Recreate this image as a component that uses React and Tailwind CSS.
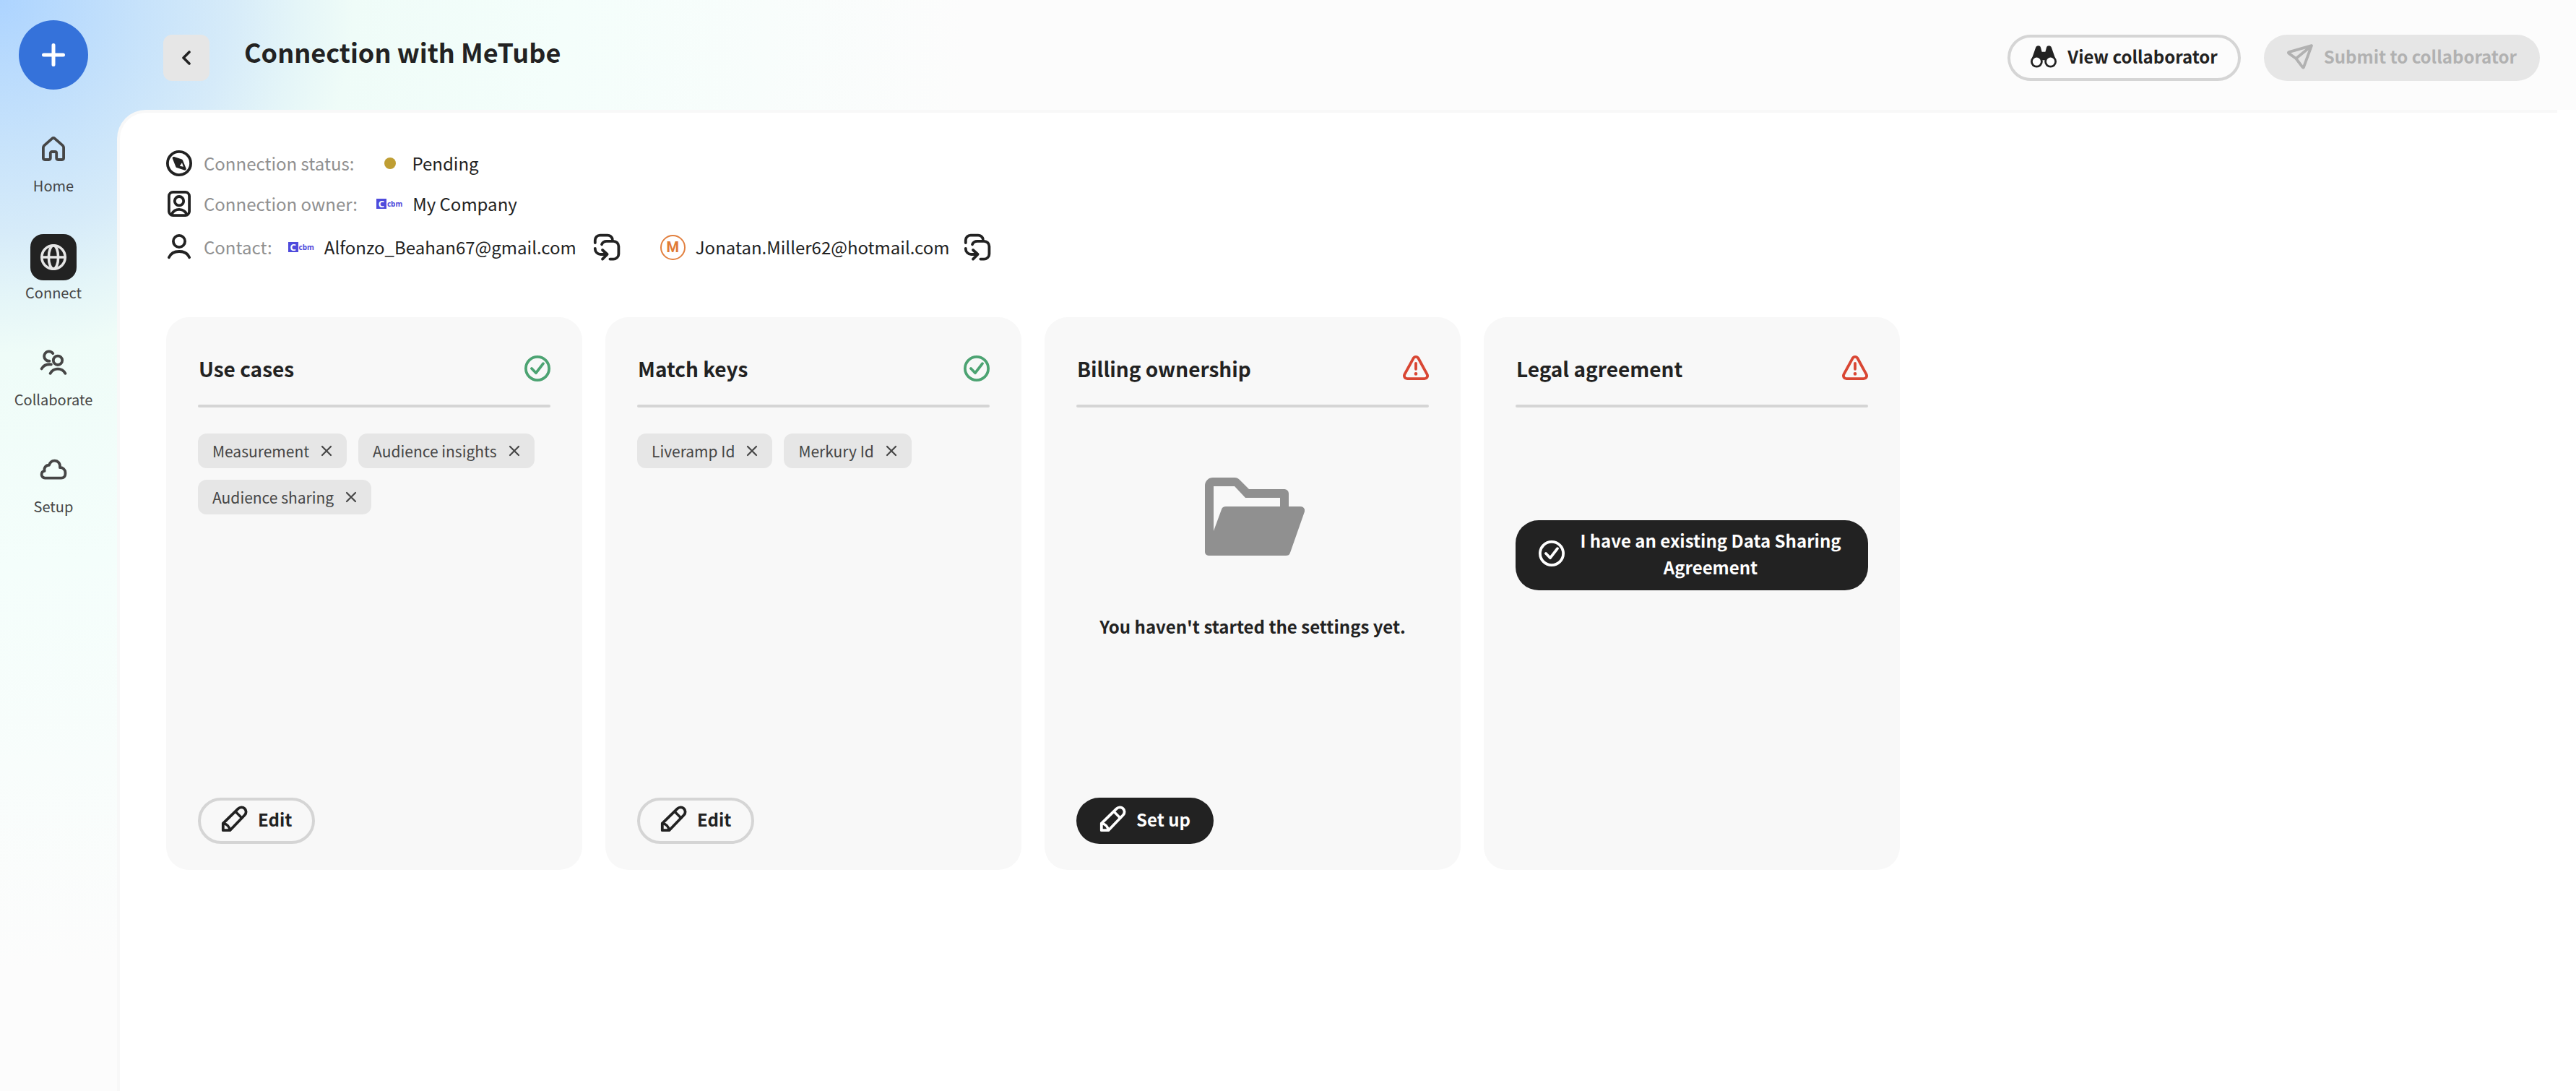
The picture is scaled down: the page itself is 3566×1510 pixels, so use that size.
import React from "react";

function Icon({ children, className = "size-10", stroke = 1.9 }) {
  return (
    <svg
      viewBox="0 0 20 20"
      fill="none"
      stroke="currentColor"
      strokeWidth={stroke}
      strokeLinecap="round"
      strokeLinejoin="round"
      aria-hidden="true"
      className={`shrink-0 ${className}`}
    >
      {children}
    </svg>
  );
}

const HomeIcon = () => (
  <Icon>
    <path d="M9 2.9 3.6 7.7a1.9 1.9 0 0 0-.65 1.4v7.3a1.1 1.1 0 0 0 1.1 1.1H6.8a1.1 1.1 0 0 0 1.1-1.1V13a1 1 0 0 1 1-1h2.2a1 1 0 0 1 1 1v3.4a1.1 1.1 0 0 0 1.1 1.1h2.75a1.1 1.1 0 0 0 1.1-1.1V9.1a1.9 1.9 0 0 0-.65-1.4L11 2.9a1.5 1.5 0 0 0-2 0z" />
  </Icon>
);

const GlobeIcon = () => (
  <Icon stroke={1.8}>
    <circle cx="10" cy="10" r="8.1" />
    <ellipse cx="10" cy="10" rx="3.3" ry="8.1" />
    <path d="M1.9 10h16.2" />
  </Icon>
);

const PeopleIcon = () => (
  <Icon>
    <circle cx="13" cy="8.4" r="3.1" />
    <path d="M9.6 3.6A3.3 3.3 0 1 0 7.2 8.8M7.8 17.4c1.1-2 3-3.1 5.2-3.1s4.1 1.1 5.2 3.1M1.8 14.2c1.2-2.2 3.6-3.4 6.6-3" />
  </Icon>
);

const CloudIcon = () => (
  <Icon>
    <path d="M4.1 15.8a2.3 2.3 0 0 1-2.3-2.4c0-1.5.9-2.4 2-2.5-.5-2.2 1-4.2 3.2-4C7.6 4.9 9 3.8 10.7 3.8c2.5 0 4.1 2 3.8 4.8 2.1-.1 3.7 1.4 3.7 3.4v1c0 1.7-1.2 2.8-2.8 2.8z" />
  </Icon>
);

const CompassIcon = () => (
  <Icon>
    <circle cx="10" cy="10" r="8.05" />
    <path d="m6.3 6.4 5.3 1.8 2.3 5.7-5.3-1.8z" fill="currentColor" />
    <path d="m12 9.6.9 2.8-2.5-.5z" fill="white" stroke="none" />
  </Icon>
);

const OwnerIcon = () => (
  <Icon>
    <rect x="2.95" y="1.95" width="14.1" height="16.1" rx="2.8" />
    <circle cx="10" cy="8.1" r="3.1" />
    <path d="M4.9 17c1.1-2 3-3.1 5.1-3.1s4 1.1 5.1 3.1" />
  </Icon>
);

const PersonIcon = () => (
  <Icon>
    <circle cx="10" cy="6" r="4.05" />
    <path d="M2.95 17.1C4.1 14.6 6.8 13 10 13s5.9 1.6 7.05 4.1" />
  </Icon>
);

const ReassignIcon = () => (
  <Icon>
    <path d="M1.9 7V5.2a3.4 3.4 0 0 1 3.4-3.4h5.2c1.7 0 2.9 1 3.4 2.7" />
    <path d="M6.5 8.1c.6-1.4 1.8-2.2 3.4-2.2h4.7a3.6 3.6 0 0 1 3.6 3.6v5.2a3.6 3.6 0 0 1-3.6 3.6h-2.4" />
    <path d="M1.9 10.9v.3A3.8 3.8 0 0 0 5.7 15h4.4M7 12l3.3 3L7 18.3" />
  </Icon>
);

const PencilIcon = () => (
  <Icon>
    <path d="M2.4 17.6v-4.8L12.9 2.6a3 3 0 0 1 4.5 4.4L7.2 17.6z" />
    <path d="m11 4.6 4.4 4.5M2.5 12.9c2.5.2 4.4 2.2 4.6 4.6" strokeWidth="1.7" />
  </Icon>
);

const CheckCircleIcon = () => (
  <Icon>
    <circle cx="10" cy="10" r="8.05" />
    <path d="m6 10 3 3.1 5-6.5" />
  </Icon>
);

const AlertIcon = () => (
  <Icon>
    <path d="M8.3 2.9a1.95 1.95 0 0 1 3.4 0l6.1 11.2a2.05 2.05 0 0 1-1.8 3H4a2.05 2.05 0 0 1-1.8-3z" />
    <path d="M10 6.4v4" />
    <circle cx="10" cy="13.7" r="1.15" fill="currentColor" stroke="none" />
  </Icon>
);

const BinocularsIcon = () => (
  <Icon stroke={1.4}>
    <path
      d="m1.5 12.6 3-8.6c.5-1.7 3-1.8 3.5-.1l.8 3h2.4l.8-3c.5-1.7 3-1.6 3.5.1l3 8.6-6.6 1.2-1-1.2H9.1l-1 1.2z"
      fill="currentColor"
      stroke="none"
    />
    <circle cx="5.2" cy="13.6" r="3.5" fill="white" />
    <circle cx="14.8" cy="13.6" r="3.5" fill="white" />
  </Icon>
);

const SendIcon = () => (
  <Icon>
    <path d="M18 2.6 2.2 7.1a.4.4 0 0 0-.1.7l5.1 3.7 4.6 6.1a.4.4 0 0 0 .7-.1zL7.2 11.5" />
  </Icon>
);

const FolderIcon = () => (
  <svg viewBox="0 0 138 108" fill="#909090" aria-hidden="true" className="h-[108px] w-[138px]">
    <path
      fillRule="evenodd"
      d="M5 108a5 5 0 0 1-5-5V11A11 11 0 0 1 11 0h30c3 0 5 1 7 3l13 13h49a6 6 0 0 1 6 6v18h16c4 0 7 3 6 7l-20 57c-1 3-3 4-6 4zM12 12v62l11-30c1-3 3-4 6-4h75V28H56L41 12z"
    />
  </svg>
);

const FONT = "font-['Noto_Sans_CJK_SC','Noto_Sans',sans-serif]";

const NAV = [
  { label: "Home", icon: HomeIcon },
  { label: "Connect", icon: GlobeIcon, active: true },
  { label: "Collaborate", icon: PeopleIcon },
  { label: "Setup", icon: CloudIcon },
];

function Sidebar() {
  return (
    <aside className="flex w-[162px] shrink-0 flex-col pt-7">
      <div className="flex w-[148px] flex-col items-center">
        <button
          type="button"
          aria-label="Create"
          className="flex size-24 items-center justify-center rounded-full bg-[#3572da] text-white"
        >
          <svg viewBox="0 0 32 32" className="size-8" stroke="currentColor" strokeWidth="5" strokeLinecap="round">
            <path d="M16 2.5v27M2.5 16h27" />
          </svg>
        </button>
        <nav className="mt-[52px] flex flex-col gap-[50px]">
          {NAV.map(({ label, icon: Glyph, active }) => (
            <a
              key={label}
              href="#"
              aria-current={active ? "page" : undefined}
              className="flex flex-col items-center text-[20px] leading-[34px] text-[#464646]"
            >
              <span
                className={
                  active
                    ? "flex size-16 items-center justify-center rounded-[18px] bg-[#222222] text-[#e6e6e6]"
                    : "flex size-16 items-center justify-center pb-1"
                }
              >
                <Glyph />
              </span>
              {label}
            </a>
          ))}
        </nav>
      </div>
    </aside>
  );
}

function OutlineButton({ children }) {
  return (
    <button
      type="button"
      className="flex h-16 items-center gap-[13px] rounded-full border-4 border-[#d5d5d5] pr-[28px] pb-1 pl-[26px] text-[24px] leading-8 font-bold text-[#222222]"
    >
      {children}
    </button>
  );
}

function Header() {
  return (
    <header className="flex h-[152px] items-center justify-between pt-2 pr-[50px] pl-16">
      <div className="flex items-center gap-12">
        <button
          type="button"
          aria-label="Back"
          className="flex size-16 items-center justify-center rounded-xl bg-[#e6e6e6] text-[#222222]"
        >
          <svg viewBox="0 0 20 20" className="size-5" fill="none" stroke="currentColor" strokeWidth="3.6" strokeLinecap="round" strokeLinejoin="round">
            <path d="m14 2-8 8 8 8" />
          </svg>
        </button>
        <h1 className="pb-[18px] text-[36px] leading-[46px] font-bold text-[#222222]">Connection with MeTube</h1>
      </div>
      <div className="flex items-center gap-8">
        <OutlineButton>
          <BinocularsIcon />
          View collaborator
        </OutlineButton>
        <button
          type="button"
          disabled
          className="flex h-16 items-center gap-[13px] rounded-full bg-[#e6e6e6] pr-8 pb-1 pl-[30px] text-[24px] leading-8 font-bold text-[#b1b1b1]"
        >
          <SendIcon />
          Submit to collaborator
        </button>
      </div>
    </header>
  );
}

function CompanyLogo() {
  return (
    <span className="flex items-center gap-px font-['Noto_Sans',sans-serif] text-[10px] leading-[14px] font-bold text-[#4f4bdc]">
      <span className="flex size-[14px] items-center justify-center bg-[#4f4bdc] text-[13px] text-white">C</span>
      cbm
    </span>
  );
}

function Label({ children }) {
  return <span className="text-[#909090]">{children}</span>;
}

function Details() {
  return (
    <section className="-ml-0.5 flex flex-col text-[24px] leading-10 text-[#222222]">
      <div className="flex items-center gap-[14px]">
        <CompassIcon />
        <Label>Connection status:</Label>
        <span className="ml-7 size-4 rounded-full bg-[#bf9e33]" />
        <span className="ml-2">Pending</span>
      </div>
      <div className="mt-4 flex items-center gap-[14px]">
        <OwnerIcon />
        <Label>Connection owner:</Label>
        <span className="ml-3">
          <CompanyLogo />
        </span>
        <span>My Company</span>
      </div>
      <div className="mt-5 flex items-center gap-[14px]">
        <PersonIcon />
        <Label>Contact:</Label>
        <span className="ml-2">
          <CompanyLogo />
        </span>
        <span>Alfonzo_Beahan67@gmail.com</span>
        <button type="button" aria-label="Reassign contact" className="ml-2">
          <ReassignIcon />
        </button>
        <span className="ml-10 flex size-[35px] items-center justify-center rounded-full border-2 border-[#e2803f] font-['Roboto',sans-serif] text-[20px] font-bold text-[#e07a35]">
          M
        </span>
        <span>Jonatan.Miller62@hotmail.com</span>
        <button type="button" aria-label="Reassign contact" className="ml-1">
          <ReassignIcon />
        </button>
      </div>
    </section>
  );
}

function Card({ title, done, children, footer }) {
  return (
    <section className="flex min-h-[765px] w-[576px] flex-col rounded-[32px] bg-[#f8f8f8] px-11 pt-[51px] pb-9">
      <div className="flex items-center justify-between pl-px">
        <h2 className="text-[28px] leading-10 font-bold text-[#222222]">{title}</h2>
        <span className={done ? "-mr-0.5 text-[#4ca372]" : "-mr-0.5 text-[#d94633]"}>
          {done ? <CheckCircleIcon /> : <AlertIcon />}
        </span>
      </div>
      <hr className="mt-[30px] h-1 rounded-full border-0 bg-[#d5d5d5]" />
      <div className="flex flex-1 flex-col pt-9">{children}</div>
      {footer}
    </section>
  );
}

function Tags({ items }) {
  return (
    <ul className="flex flex-wrap gap-4">
      {items.map((item) => (
        <li
          key={item}
          className="flex h-12 items-center gap-4 rounded-xl bg-[#e6e6e6] px-5 text-[21px] leading-8 text-[#464646]"
        >
          {item}
          <button type="button" aria-label={`Remove ${item}`}>
            <svg viewBox="0 0 16 16" className="size-4" stroke="currentColor" strokeWidth="2.2" strokeLinecap="round">
              <path d="m2 2 12 12M14 2 2 14" />
            </svg>
          </button>
        </li>
      ))}
    </ul>
  );
}

function EditButton() {
  return (
    <div className="flex">
      <OutlineButton>
        <PencilIcon />
        Edit
      </OutlineButton>
    </div>
  );
}

export default function App() {
  return (
    <div
      className={`flex min-h-screen bg-[#fcfcfc] bg-[radial-gradient(circle_at_0_0,#add4ff_0px,#c6e2fb_190px,#d6ebf9_320px,#e4f5f8_410px,#effcf8_490px,#f4fefb_780px,#fcfcfc_1340px)] ${FONT}`}
    >
      <Sidebar />
      <div className="flex min-w-0 flex-1 flex-col">
        <Header />
        <main className="relative flex-1 rounded-tl-[40px] border-t-4 border-l-4 border-[#f8f8f8] bg-white px-16 pt-[50px] pb-16">
          <span className="absolute -top-1 right-0 h-1 w-[26px] bg-white" />
          <Details />
          <div className="mt-[77px] flex flex-wrap gap-8">
            <Card title="Use cases" done footer={<EditButton />}>
              <Tags items={["Measurement", "Audience insights", "Audience sharing"]} />
            </Card>
            <Card title="Match keys" done footer={<EditButton />}>
              <Tags items={["Liveramp Id", "Merkury Id"]} />
            </Card>
            <Card
              title="Billing ownership"
              footer={
                <div className="flex">
                  <button
                    type="button"
                    className="flex h-16 items-center gap-[13px] rounded-full bg-[#222222] pr-8 pb-1 pl-[30px] text-[24px] leading-8 font-bold text-white"
                  >
                    <PencilIcon />
                    Set up
                  </button>
                </div>
              }
            >
              <div className="flex flex-col items-center pt-[61px]">
                <div className="pl-1.5">
                  <FolderIcon />
                </div>
                <p className="mt-20 text-[24px] leading-9 font-bold text-[#222222]">
                  You haven't started the settings yet.
                </p>
              </div>
            </Card>
            <Card title="Legal agreement">
              <button
                type="button"
                className="mt-[120px] flex items-center gap-[14px] rounded-[32px] bg-[#222222] pt-[9px] pr-8 pb-[14px] pl-[30px] text-[24px] leading-[37px] font-bold text-white"
              >
                <CheckCircleIcon />
                <span className="flex-1 text-center">I have an existing Data Sharing Agreement</span>
              </button>
            </Card>
          </div>
        </main>
      </div>
    </div>
  );
}
